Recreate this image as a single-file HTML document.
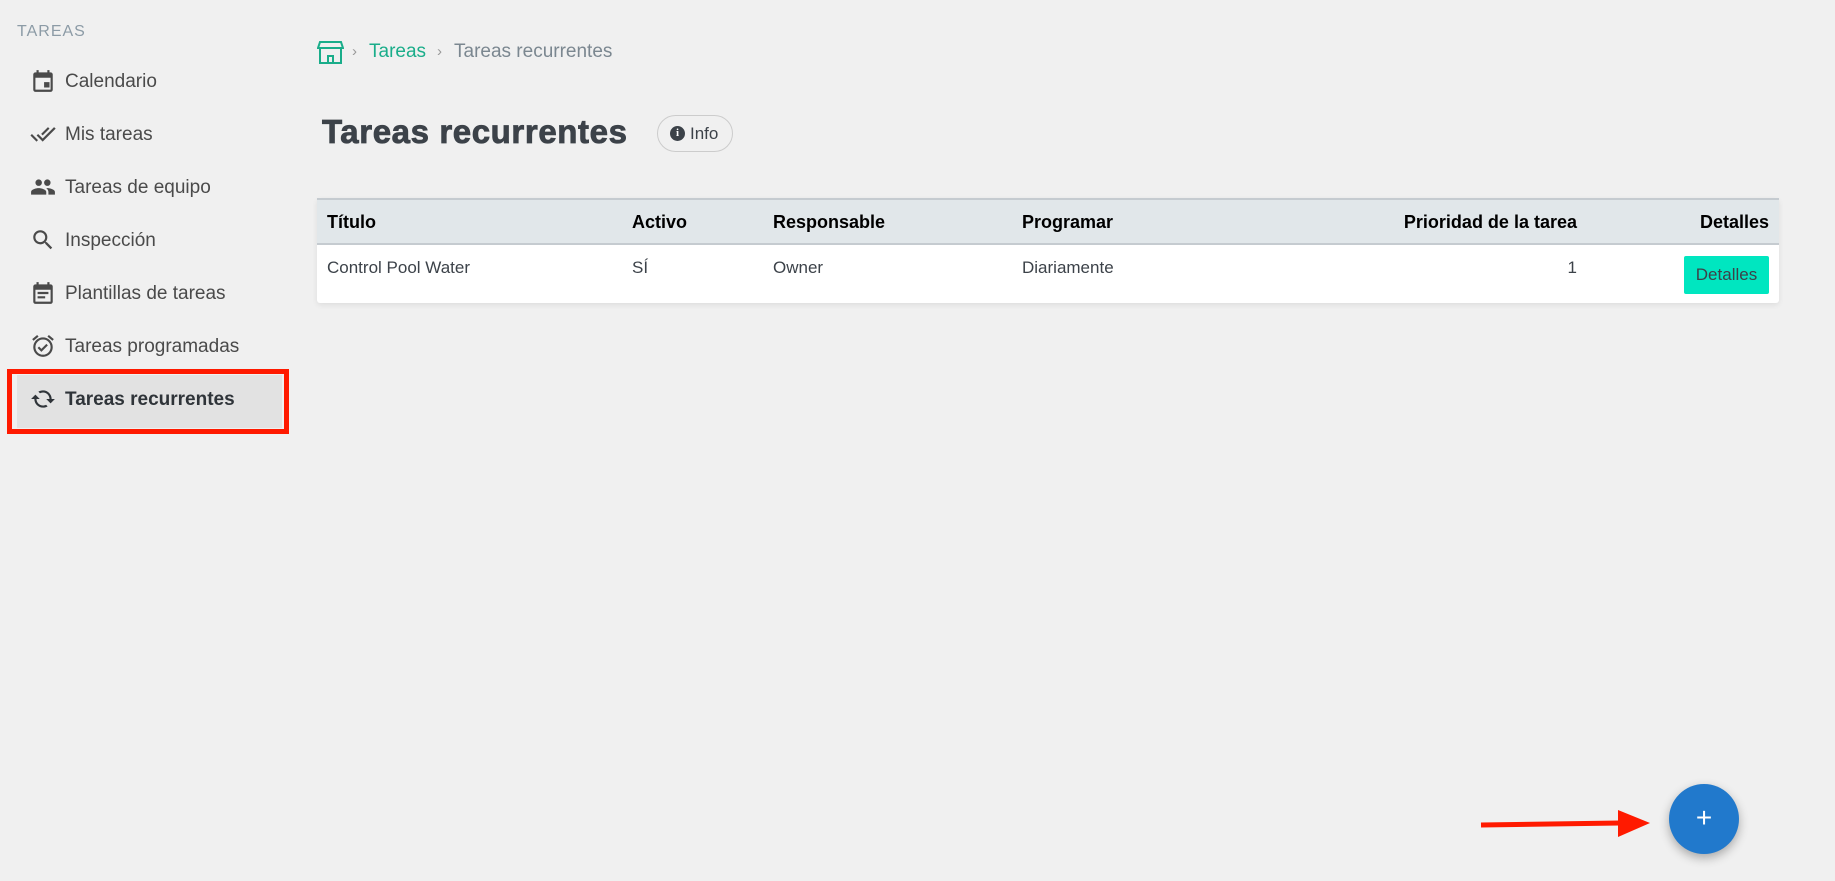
<!DOCTYPE html>
<html><head><meta charset="utf-8"><style>
*{box-sizing:border-box;margin:0;padding:0}
body{width:1835px;height:881px;background:#f0f0f0;font-family:"Liberation Sans",Arial,sans-serif;position:relative;overflow:hidden}
.abs{position:absolute}
.sec{left:17px;top:23px;font-size:16px;color:#8c9ba6;letter-spacing:1px}
.item{position:absolute;left:30px;height:30px;display:flex;align-items:center;font-size:19px;color:#4a4a4a}
.item svg{width:26px;height:26px;margin-right:9px;fill:#4a4a4a;position:relative;top:-1px}
</style></head><body>
<div class="abs sec">TAREAS</div>
<div class="item" style="top:67px"><svg viewBox="0 0 24 24"><path d="M19 4h-1V2h-2v2H8V2H6v2H5a2 2 0 0 0-2 2v14a2 2 0 0 0 2 2h14a2 2 0 0 0 2-2V6a2 2 0 0 0-2-2zm0 16H5V9h14zm-6-7h5v5h-5z"/></svg>Calendario</div>
<div class="item" style="top:120px"><svg viewBox="0 0 24 24"><path d="M18 7l-1.4-1.4-6.3 6.3 1.4 1.4zm4.2-1.4L11.7 16.2 7.5 12l-1.4 1.4 5.6 5.6 12-12zM.4 13.4 6 19l1.4-1.4L1.8 12z"/></svg>Mis tareas</div>
<div class="item" style="top:173px"><svg viewBox="0 0 24 24"><path d="M16 11a3 3 0 1 0 0-6 3 3 0 0 0 0 6zm-8 0a3 3 0 1 0 0-6 3 3 0 0 0 0 6zm0 2c-2.3 0-7 1.2-7 3.5V19h14v-2.5C15 14.2 10.3 13 8 13zm8 0c-.3 0-.6 0-1 .1 1.2.8 2 2 2 3.4V19h6v-2.5c0-2.3-4.7-3.5-7-3.5z"/></svg>Tareas de equipo</div>
<div class="item" style="top:226px"><svg viewBox="0 0 24 24"><path d="M15.5 14h-.79l-.28-.27A6.47 6.47 0 0 0 16 9.5 6.5 6.5 0 1 0 9.5 16c1.61 0 3.09-.59 4.23-1.57l.27.28v.79l5 4.99L20.49 19l-4.99-5zm-6 0C7.01 14 5 11.99 5 9.5S7.01 5 9.5 5 14 7.01 14 9.5 11.99 14 9.5 14z"/></svg>Inspección</div>
<div class="item" style="top:279px"><svg viewBox="0 0 24 24"><path d="M19 4h-1V2h-2v2H8V2H6v2H5a2 2 0 0 0-2 2v14a2 2 0 0 0 2 2h14a2 2 0 0 0 2-2V6a2 2 0 0 0-2-2zm0 16H5V9h14zM7 11h10v2H7zm0 4h7v2H7z"/></svg>Plantillas de tareas</div>
<div class="item" style="top:332px"><svg viewBox="0 0 24 24"><path d="M22 5.7 17.4 1.8l-1.3 1.5 4.6 3.9zM7.9 3.4 6.6 1.9 2 5.7l1.3 1.5zM12 4a9 9 0 1 0 0 18 9 9 0 0 0 0-18zm0 16a7 7 0 1 1 0-14 7 7 0 0 1 0 14zm-1.5-5.4-2.1-2.1L7 13.9l3.5 3.5 6-6-1.4-1.4z"/></svg>Tareas programadas</div>
<div class="abs" style="left:7px;top:369px;width:282px;height:65px;border:5px solid #ff1a00;background:#f0f0f0"><div style="position:absolute;left:5px;top:1px;right:2px;bottom:1px;background:#e2e2e2"></div></div>
<div class="item" style="top:385px;font-weight:bold;color:#2f3439"><svg viewBox="0 0 24 24" style="fill:#2f3439"><path d="M12 6v3l4-4-4-4v3c-4.42 0-8 3.58-8 8 0 1.57.46 3.03 1.24 4.26L6.7 14.8A5.87 5.87 0 0 1 6 12c0-3.31 2.69-6 6-6zm6.76 1.74L17.3 9.2c.44.84.7 1.790.7 2.8 0 3.31-2.69 6-6 6v-3l-4 4 4 4v-3c4.42 0 8-3.58 8-8 0-1.57-.46-3.030-1.24-4.26z" transform="rotate(90 12 12)"/></svg>Tareas recurrentes</div>

<svg class="abs" style="left:317px;top:41px" width="27" height="23" viewBox="0 0 27 23"><path d="M3 1h21l2 6H1z M3 8v14h21V8 M11 22v-7h5v7" fill="none" stroke="#1aad8a" stroke-width="2"/></svg>
<div class="abs" style="left:352px;top:43px;font-size:15px;color:#999">›</div>
<div class="abs" style="left:369px;top:41px;font-size:19px;color:#1aad8a">Tareas</div>
<div class="abs" style="left:437px;top:43px;font-size:15px;color:#999">›</div>
<div class="abs" style="left:454px;top:41px;font-size:19px;color:#7b8790">Tareas recurrentes</div>

<div class="abs" style="left:322px;top:113px;font-size:33px;font-weight:bold;color:#3c4249;letter-spacing:0.6px;-webkit-text-stroke:0.8px #3c4249">Tareas recurrentes</div>
<div class="abs" style="left:657px;top:115px;width:76px;height:37px;border:1px solid #ccc;border-radius:19px;display:flex;align-items:center;padding-left:12px;font-size:17px;color:#3c4249"><span style="display:inline-block;width:15px;height:15px;border-radius:50%;background:#3c4249;color:#fff;font-size:11px;font-weight:bold;text-align:center;line-height:15px;margin-right:5px;font-family:'Liberation Serif'">i</span>Info</div>

<div class="abs" style="left:317px;top:198px;width:1462px;height:105px;background:#fff;border-radius:3px;box-shadow:0 2px 6px rgba(0,0,0,.08)">
<div style="height:47px;background:#e1e7ea;border-top:2px solid #c5cbd0;border-bottom:2px solid #c5cbd0;position:relative;font-weight:bold;font-size:18px;color:#000">
<span class="abs" style="left:10px;top:12px">Título</span>
<span class="abs" style="left:315px;top:12px">Activo</span>
<span class="abs" style="left:456px;top:12px">Responsable</span>
<span class="abs" style="left:705px;top:12px">Programar</span>
<span class="abs" style="right:202px;top:12px">Prioridad de la tarea</span>
<span class="abs" style="right:10px;top:12px">Detalles</span>
</div>
<div style="position:relative;font-size:17px;color:#3c4249">
<span class="abs" style="left:10px;top:13px">Control Pool Water</span>
<span class="abs" style="left:315px;top:13px">SÍ</span>
<span class="abs" style="left:456px;top:13px">Owner</span>
<span class="abs" style="left:705px;top:13px">Diariamente</span>
<span class="abs" style="right:202px;top:13px">1</span>
<span class="abs" style="right:10px;top:11px;width:85px;height:38px;background:#00e6c0;border-radius:2px;text-align:center;line-height:38px">Detalles</span>
</div></div>

<svg class="abs" style="left:1478px;top:805px" width="175" height="36"><line x1="3" y1="20" x2="142" y2="18" stroke="#ff1a00" stroke-width="5"/><path d="M140 5 L172 18 L140 32z" fill="#ff1a00"/></svg>
<div class="abs" style="left:1669px;top:784px;width:70px;height:70px;border-radius:50%;background:#2179cc;box-shadow:0 4px 10px rgba(0,0,0,.3);color:#fff;font-size:28px;text-align:center;line-height:68px">+</div>
</body></html>
